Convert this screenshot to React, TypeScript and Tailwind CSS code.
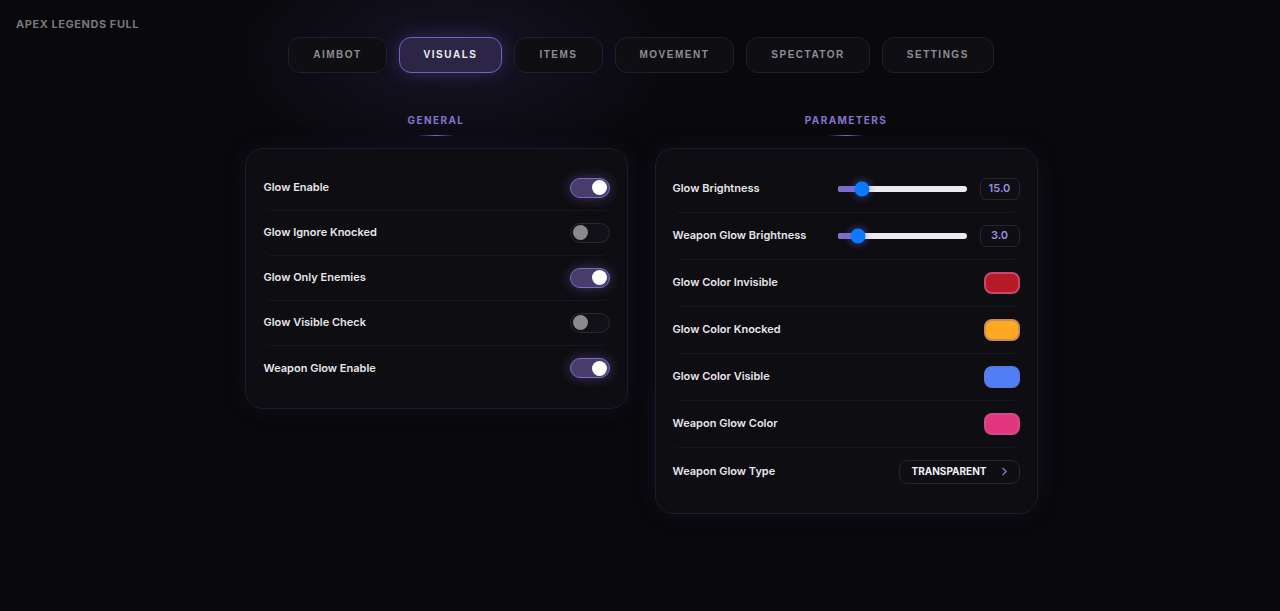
import { ChevronRight } from 'lucide-react';

const tabs = ['AIMBOT', 'VISUALS', 'ITEMS', 'MOVEMENT', 'SPECTATOR', 'SETTINGS'];

const toggles = [
	{ label: 'Glow Enable', on: true },
	{ label: 'Glow Ignore Knocked', on: false },
	{ label: 'Glow Only Enemies', on: true },
	{ label: 'Glow Visible Check', on: false },
	{ label: 'Weapon Glow Enable', on: true },
];

const colors = [
	{ label: 'Glow Color Invisible', cls: 'bg-[#b71a27] border-[#c8466e]' },
	{ label: 'Glow Color Knocked', cls: 'bg-[#fdaa22] border-[#c98b5d]' },
	{ label: 'Glow Color Visible', cls: 'bg-[#4f7ef6] border-[#5b79e0]' },
	{ label: 'Weapon Glow Color', cls: 'bg-[#e2377f] border-[#d04b8a]' },
];

function Toggle({ on }: { on: boolean }) {
	return on ? (
		<div className="flex h-5 w-10 items-center justify-end rounded-full border border-[#7c69c4] bg-[#483d6a] px-[2px] shadow-[0_0_12px_rgba(124,105,196,0.45)]">
			<div className="h-[15px] w-[15px] rounded-full bg-white" />
		</div>
	) : (
		<div className="flex h-5 w-10 items-center rounded-full border border-[#2a2634] bg-[#121117] px-[2px]">
			<div className="h-[15px] w-[15px] rounded-full bg-[#8a8a8e]" />
		</div>
	);
}

function Slider({ pct, value }: { pct: number; value: string }) {
	return (
		<div className="flex items-center gap-[13px]">
			<div className="relative h-[6px] w-[129px] rounded-full bg-[#ececf0]">
				<div className="h-full rounded-full bg-[#7b6cc9]" style={{ width: `${pct}%` }} />
				<div
					className="absolute top-1/2 h-[15px] w-[15px] -translate-x-1/2 -translate-y-1/2 rounded-full bg-[#0a7bff] shadow-[0_0_8px_rgba(120,110,255,0.6)]"
					style={{ left: `${pct}%` }}
				/>
			</div>
			<div className="flex h-[22px] w-[40px] items-center justify-center rounded-md border border-[#26232f] bg-[#0f0e13] text-[11px] font-semibold text-[#9b8be0]">
				{value}
			</div>
		</div>
	);
}

function Heading({ text }: { text: string }) {
	return (
		<div className="flex flex-col items-center gap-[7px]">
			<span className="text-[10px] font-bold tracking-[0.14em] text-[#8672cf]">{text}</span>
			<div className="h-px w-9 bg-gradient-to-r from-transparent via-[#7d66cf] to-transparent" />
		</div>
	);
}

export default function App() {
	return (
		<div
			className="relative h-[611px] w-full overflow-hidden bg-[#09090c] text-white"
			style={{ fontFamily: 'Inter, "Noto Sans", sans-serif' }}
		>
			<div className="pointer-events-none absolute left-[454px] top-[55px] h-[240px] w-[460px] -translate-x-1/2 -translate-y-1/2 rounded-full bg-[radial-gradient(ellipse_at_center,rgba(70,55,130,0.22),transparent_70%)]" />

			<div className="relative px-4 pt-[16px] text-[11px] font-bold tracking-[0.05em] text-[#77777c]">
				APEX LEGENDS FULL
			</div>

			<div
				className="relative mt-[4px] flex justify-center gap-3 pl-[2px]"
				style={{ fontFamily: '"Liberation Sans", Arial, sans-serif' }}
			>
				{tabs.map((t) =>
					t === 'VISUALS' ? (
						<div
							key={t}
							className="flex h-[36px] items-center rounded-xl border border-[#7562bd] bg-[#2c2545] px-6 text-[10px] font-bold tracking-[0.15em] text-[#ececf2] shadow-[0_0_18px_rgba(110,90,200,0.35)]"
						>
							{t}
						</div>
					) : (
						<div
							key={t}
							className="flex h-[36px] items-center rounded-xl border border-[#201e2a] bg-[#0f0e13] px-6 text-[10px] font-bold tracking-[0.15em] text-[#8d8d93]"
						>
							{t}
						</div>
					),
				)}
			</div>

			<div className="relative mt-[40px] flex justify-center gap-[27px] pl-[2px]">
				<div className="flex w-[383px] flex-col gap-[12px]">
					<Heading text="GENERAL" />
					<div className="rounded-[18px] border border-[#1d1b26] bg-[#0e0d12] py-[17px] pl-[18px] pr-[17px] shadow-[0_0_24px_rgba(80,60,150,0.12)]">
						{toggles.map((t, i) => (
							<div
								key={t.label}
								className={`flex h-[45px] items-center justify-between rounded-lg ${
									i < toggles.length - 1 ? 'border-b border-[#18171e]' : ''
								}`}
							>
								<span className="text-[11px] font-semibold text-[#e6e6ea]">{t.label}</span>
								<Toggle on={t.on} />
							</div>
						))}
					</div>
				</div>

				<div className="flex w-[383px] flex-col gap-[12px]">
					<Heading text="PARAMETERS" />
					<div className="rounded-[18px] border border-[#1d1b26] bg-[#0e0d12] py-[17px] pl-[17px] pr-[17px] shadow-[0_0_24px_rgba(80,60,150,0.12)]">
						<div className="flex h-[47px] items-center justify-between rounded-lg border-b border-[#18171e]">
							<span className="text-[11px] font-semibold text-[#e6e6ea]">Glow Brightness</span>
							<Slider pct={19} value="15.0" />
						</div>
						<div className="flex h-[47px] items-center justify-between rounded-lg border-b border-[#18171e]">
							<span className="text-[11px] font-semibold text-[#e6e6ea]">Weapon Glow Brightness</span>
							<Slider pct={16} value="3.0" />
						</div>
						{colors.map((c) => (
							<div
								key={c.label}
								className="flex h-[47px] items-center justify-between rounded-lg border-b border-[#18171e]"
							>
								<span className="text-[11px] font-semibold text-[#e6e6ea]">{c.label}</span>
								<div className={`h-[22px] w-9 rounded-lg border-2 ${c.cls}`} />
							</div>
						))}
						<div className="flex h-[48px] items-center justify-between">
							<span className="text-[11px] font-semibold text-[#e6e6ea]">Weapon Glow Type</span>
							<div className="flex h-6 w-[121px] items-center justify-between rounded-lg border border-[#26232f] bg-[#0f0e13] pl-3 pr-2">
								<span className="text-[10px] font-bold text-[#f0f0f3]">TRANSPARENT</span>
								<ChevronRight size={13} strokeWidth={2.5} className="text-[#8672cf]" />
							</div>
						</div>
					</div>
				</div>
			</div>
		</div>
	);
}
